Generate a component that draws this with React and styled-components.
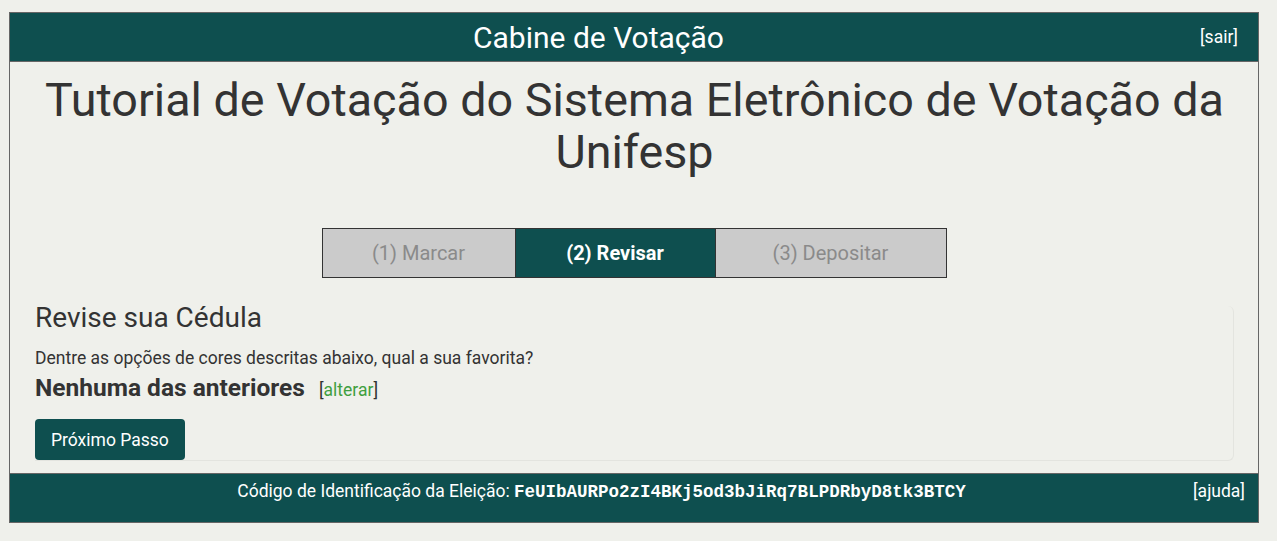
import React from 'react';
import styled, { createGlobalStyle } from 'styled-components';

const Global = createGlobalStyle`
  html, body {
    margin: 0;
    padding: 0;
    background: #eff0eb;
  }
  body {
    font-family: Roboto, "Liberation Sans", sans-serif;
    color: #333;
  }
`

const Booth = styled.div`
  width: 1250px;
  margin: 12px 0 0 9px;
  border: 1px solid #666;
  box-sizing: border-box;
  background: #eff0eb;
`

const TopBar = styled.header`
  display: flex;
  align-items: center;
  height: 48px;
  padding-right: 20px;
  background: #0e4f4f;
  border-bottom: 1px solid #666;
  color: #fff;
`

TopBar.Title = styled.h1`
  flex: 1;
  margin: 0;
  text-align: center;
  font-size: 30px;
  font-weight: 400;
`

TopBar.Link = styled.a`
  margin-left: 13px;
  font-size: 17.5px;
  color: #fff;
  text-decoration: none;
`

const Main = styled.main`
  padding: 12px 24px 12px 25px;
`

const Headline = styled.h2`
  margin: 0;
  text-align: center;
  font-size: 46.7px;
  font-weight: 400;
  line-height: 52px;
  color: #333;
`

const Steps = styled.ol`
  display: flex;
  justify-content: center;
  margin: 50px 0 0;
  padding: 0;
  list-style: none;
`

Steps.Item = styled.li`
  width: ${p => p.w}px;
  height: 50px;
  box-sizing: border-box;
  display: flex;
  align-items: center;
  justify-content: center;
  border: 1px solid #333;
  margin-left: -1px;
  font-size: 20px;
  font-weight: ${p => (p.active ? 700 : 400)};
  color: ${p => (p.active ? '#fff' : '#8a8a8a')};
  background: ${p => (p.active ? '#0e4f4f' : '#cbcbcb')};
`

const Ballot = styled.section`
  margin: 28px 0 0 0;
  width: 1198px;
  border-right: 1px solid #e3e4df;
  border-bottom: 1px solid #e3e4df;
  border-radius: 0 6px 6px 0;
`

Ballot.Heading = styled.h3`
  margin: 0;
  font-size: 28px;
  font-weight: 400;
  line-height: 24px;
  color: #333;
`

Ballot.Question = styled.p`
  margin: 16px 0 0;
  font-size: 17.5px;
  line-height: 24px;
`

Ballot.Answer = styled.div`
  display: flex;
  align-items: baseline;
  margin-top: 3px;
  line-height: 30px;
`

Ballot.Choice = styled.strong`
  font-size: 24.5px;
  font-weight: 700;
  color: #333;
`

Ballot.Edit = styled.span`
  margin-left: 14px;
  font-size: 17.5px;
  color: #333;

  a {
    color: #3f9f3f;
    text-decoration: none;
  }
`

const NextButton = styled.button`
  display: block;
  margin-top: 14px;
  height: 41px;
  padding: 0 16px;
  border: 0;
  border-radius: 4px;
  background: #0e4f4f;
  color: #fff;
  font-family: Roboto, "Liberation Sans", sans-serif;
  font-size: 17.5px;
  cursor: pointer;
`

const Footer = styled.footer`
  display: flex;
  align-items: flex-start;
  height: 49px;
  padding: 4px 13px 0 0;
  box-sizing: border-box;
  background: #0e4f4f;
  border-top: 1px solid #666;
  color: #fff;
  font-size: 17.5px;
  line-height: 26px;
`

Footer.Info = styled.div`
  flex: 1;
  text-align: center;
`

Footer.Code = styled.code`
  font-family: "Liberation Mono", "Courier New", monospace;
  font-weight: 700;
  font-size: 17.5px;
`

Footer.Link = styled.a`
  color: #fff;
  text-decoration: none;
`

const steps = [
  { label: '(1) Marcar', w: 194 },
  { label: '(2) Revisar', w: 201, active: true },
  { label: '(3) Depositar', w: 232 },
];

export default function App() {
  return (
    <>
      <Global />
      <Booth>
        <TopBar>
          <TopBar.Title>Cabine de Votação</TopBar.Title>
          <TopBar.Link href="#">[sair]</TopBar.Link>
        </TopBar>
        <Main>
          <Headline>Tutorial de Votação do Sistema Eletrônico de Votação da Unifesp</Headline>
          <Steps>
            {steps.map(s => (
              <Steps.Item key={s.label} w={s.w} active={s.active}>{s.label}</Steps.Item>
            ))}
          </Steps>
          <Ballot>
            <Ballot.Heading>Revise sua Cédula</Ballot.Heading>
            <Ballot.Question>Dentre as opções de cores descritas abaixo, qual a sua favorita?</Ballot.Question>
            <Ballot.Answer>
              <Ballot.Choice>Nenhuma das anteriores</Ballot.Choice>
              <Ballot.Edit>[<a href="#">alterar</a>]</Ballot.Edit>
            </Ballot.Answer>
            <NextButton>Próximo Passo</NextButton>
          </Ballot>
        </Main>
        <Footer>
          <Footer.Info>
            Código de Identificação da Eleição: <Footer.Code>FeUIbAURPo2zI4BKj5od3bJiRq7BLPDRbyD8tk3BTCY</Footer.Code>
          </Footer.Info>
          <Footer.Link href="#">[ajuda]</Footer.Link>
        </Footer>
      </Booth>
    </>
  );
}
